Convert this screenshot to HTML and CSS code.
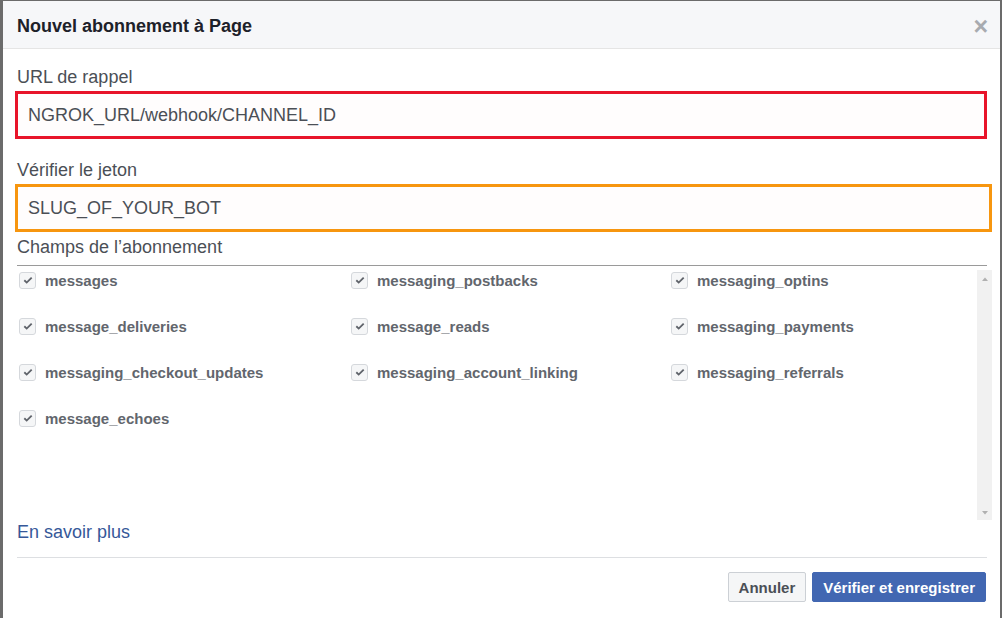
FILE: index.html
```html
<!DOCTYPE html>
<html lang="fr">
<head>
<meta charset="utf-8">
<link rel="stylesheet" href="styles.css">
</head>
<body>
<div class="dialog">
  <div class="header">
    <h1 class="title">Nouvel abonnement à Page</h1>
    <span class="close">×</span>
  </div>
  <div class="body">
    <label class="label">URL de rappel</label>
    <div class="input input-red">NGROK_URL/webhook/CHANNEL_ID</div>
    <label class="label label-2">Vérifier le jeton</label>
    <div class="input input-orange">SLUG_OF_YOUR_BOT</div>
    <div class="label label-3">Champs de l’abonnement</div>
    <div class="fields-wrap">
      <div class="fields">
        <div class="field"><span class="cb"><svg viewBox="0 0 16 16"><path d="M3.8 8.3l2.7 2.6L12.2 5.2" fill="none" stroke="#5f636a" stroke-width="2.1"/></svg></span>messages</div>
        <div class="field"><span class="cb"><svg viewBox="0 0 16 16"><path d="M3.8 8.3l2.7 2.6L12.2 5.2" fill="none" stroke="#5f636a" stroke-width="2.1"/></svg></span>messaging_postbacks</div>
        <div class="field"><span class="cb"><svg viewBox="0 0 16 16"><path d="M3.8 8.3l2.7 2.6L12.2 5.2" fill="none" stroke="#5f636a" stroke-width="2.1"/></svg></span>messaging_optins</div>
        <div class="field"><span class="cb"><svg viewBox="0 0 16 16"><path d="M3.8 8.3l2.7 2.6L12.2 5.2" fill="none" stroke="#5f636a" stroke-width="2.1"/></svg></span>message_deliveries</div>
        <div class="field"><span class="cb"><svg viewBox="0 0 16 16"><path d="M3.8 8.3l2.7 2.6L12.2 5.2" fill="none" stroke="#5f636a" stroke-width="2.1"/></svg></span>message_reads</div>
        <div class="field"><span class="cb"><svg viewBox="0 0 16 16"><path d="M3.8 8.3l2.7 2.6L12.2 5.2" fill="none" stroke="#5f636a" stroke-width="2.1"/></svg></span>messaging_payments</div>
        <div class="field"><span class="cb"><svg viewBox="0 0 16 16"><path d="M3.8 8.3l2.7 2.6L12.2 5.2" fill="none" stroke="#5f636a" stroke-width="2.1"/></svg></span>messaging_checkout_updates</div>
        <div class="field"><span class="cb"><svg viewBox="0 0 16 16"><path d="M3.8 8.3l2.7 2.6L12.2 5.2" fill="none" stroke="#5f636a" stroke-width="2.1"/></svg></span>messaging_account_linking</div>
        <div class="field"><span class="cb"><svg viewBox="0 0 16 16"><path d="M3.8 8.3l2.7 2.6L12.2 5.2" fill="none" stroke="#5f636a" stroke-width="2.1"/></svg></span>messaging_referrals</div>
        <div class="field"><span class="cb"><svg viewBox="0 0 16 16"><path d="M3.8 8.3l2.7 2.6L12.2 5.2" fill="none" stroke="#5f636a" stroke-width="2.1"/></svg></span>message_echoes</div>
      </div>
      <div class="scrollbar">
        <svg class="arrow" viewBox="0 0 8 6"><path d="M1 5L4 1.5 7 5z" fill="#b0b0b0"/></svg>
        <svg class="arrow" viewBox="0 0 8 6"><path d="M1 1L4 4.5 7 1z" fill="#b0b0b0"/></svg>
      </div>
    </div>
    <a class="more">En savoir plus</a>
  </div>
  <div class="footer">
    <button class="btn btn-cancel">Annuler</button>
    <button class="btn btn-primary">Vérifier et enregistrer</button>
  </div>
</div>
</body>
</html>
```
FILE: styles.css
```css
* { box-sizing: border-box; }
html, body { margin: 0; padding: 0; }
body {
  width: 1002px;
  height: 618px;
  background: #6b6b6b;
  font-family: "Liberation Sans", Arial, sans-serif;
  padding: 1px 2px 0 3px;
  overflow: hidden;
}
.dialog {
  background: #fff;
  height: 617px;
  display: flex;
  flex-direction: column;
}
.header {
  height: 48px;
  background: #f6f7f9;
  border-bottom: 1px solid #e5e5e5;
  display: flex;
  align-items: center;
  justify-content: space-between;
  padding: 0 12px 0 14px;
}
.title {
  margin: 0;
  font-size: 18px;
  line-height: 22px;
  font-weight: bold;
  color: #1d2129;
  padding-top: 2px;
}
.close {
  font-size: 25px;
  color: #a8abb0;
  line-height: 1;
  font-weight: bold;
  padding-top: 3px;
}
.body {
  padding: 18px 10px 0 14px;
  display: flex;
  flex-direction: column;
}
.label {
  font-size: 18px;
  color: #4b4f56;
  line-height: 20px;
  display: block;
}
.input {
  margin-top: 4px;
  height: 48px;
  font-size: 18px;
  color: #4b4f56;
  display: flex;
  align-items: center;
  padding-left: 10px;
  background: #fffdfd;
}
.input-red {
  border: 3px solid #e8142a;
  width: 972px;
  margin-left: -2px;
}
.input-orange {
  border: 3px solid #f7960f;
  width: 977px;
  margin-left: -2px;
  margin-top: 4px;
}
.label-2 { margin-top: 21px; }
.label-3 { margin-top: 5px; }
.fields-wrap {
  margin-top: 8px;
  border-top: 1px solid #9a9a9a;
  width: 970px;
  height: 253px;
  position: relative;
  display: flex;
}
.fields {
  flex: 1;
  display: grid;
  grid-template-columns: 332px 320px 1fr;
  grid-auto-rows: 46px;
  padding-top: 3px;
  padding-left: 2px;
  align-content: start;
}
.field {
  display: flex;
  align-items: center;
  height: 22px;
  font-size: 15px;
  font-weight: bold;
  color: #62666d;
}
.cb {
  width: 17px;
  height: 17px;
  border: 1px solid #d5d8dc;
  border-radius: 3px;
  background: #f5f6f7;
  margin-right: 9px;
  display: inline-flex;
  align-items: center;
  justify-content: center;
}
.cb svg { width: 14px; height: 14px; }
.scrollbar {
  width: 15px;
  height: 250px;
  margin-top: 4px;
  margin-right: -5px;
  background: #f1f1f1;
  display: flex;
  flex-direction: column;
  justify-content: space-between;
  align-items: center;
  padding: 6px 0 4px;
}
.arrow { width: 8px; height: 6px; }
.more {
  margin-top: 4px;
  font-size: 18px;
  color: #365899;
  line-height: 20px;
  padding-bottom: 15px;
  border-bottom: 1px solid #dddfe2;
  width: 970px;
}
.footer {
  display: flex;
  justify-content: flex-end;
  gap: 6px;
  padding: 14px 14px 0 0;
}
.btn {
  height: 30px;
  font-family: "Liberation Sans", Arial, sans-serif;
  font-size: 15px;
  font-weight: bold;
  border-radius: 2px;
  padding: 0 10px;
  cursor: pointer;
}
.btn-cancel {
  background: #f5f6f7;
  border: 1px solid #ccd0d5;
  color: #4b4f56;
}
.btn-primary {
  background: #4267b2;
  border: 1px solid #4267b2;
  color: #fff;
}
```
